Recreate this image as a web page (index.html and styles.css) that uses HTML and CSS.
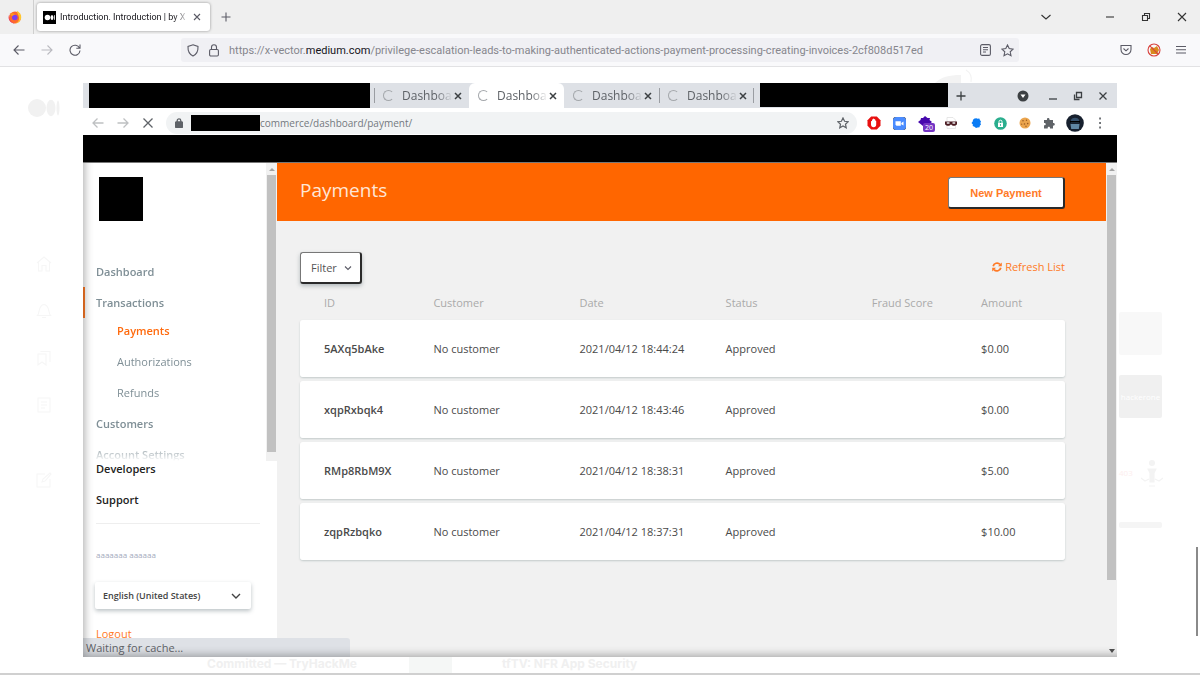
FILE: index.html
```html
<!doctype html>
<html lang="en">
<head>
  <meta charset="utf-8">
  <title>Introduction. Introduction | by X-Vector</title>
  <link rel="stylesheet" href="styles.css">
</head>
<body>
  <!-- Outer browser -->
  <header class="ff-tabs">
    <button class="ff-view" aria-label="Firefox">
      <svg width="14" height="14" viewBox="0 0 14 14"><circle cx="7" cy="7.400" r="6" fill="#ff6a2b"/><path d="M9 .8c3 1.600 4.600 4.400 4.200 7.200C12.800 11 10 13.400 7 13.400c3-1 4.500-3 4-6C10.700 5 9 4 9 .8z" fill="#ffc72e"/><path d="M1.200 4.500C.5 9 3 13 7 13.400c-3.500 0-6.400-2.700-6.400-6 0-1 .2-2 .6-2.900z" fill="#e8265a"/><circle cx="6.800" cy="7.500" r="2.800" fill="#7b3ff0"/><path d="M2 4c2-1.500 4-.6 5 .8-1.700 0-2 .8-3 1.400z" fill="#ff9a1f"/></svg>
    </button>
    <div class="ff-tab">
      <svg width="13" height="13" viewBox="0 0 13 13"><path d="M0 0h13v13H0z"/><circle cx="4.500" cy="6.500" r="2.800" fill="#fff"/><ellipse cx="9" cy="6.500" rx="1.400" ry="2.600" fill="#fff"/><path d="M11.500 4.200v4.600" stroke="#fff" stroke-width=".8"/></svg>
      <span class="ff-tab-title">Introduction. Introduction | by X</span>
      <button class="icon-btn" aria-label="Close tab"><svg width="8" height="8" viewBox="0 0 8 8"><path d="M1 1l6 6M7 1L1 7"/></svg></button>
    </div>
    <button class="icon-btn ff-new" aria-label="New tab"><svg width="10" height="10" viewBox="0 0 10 10"><path d="M5 .5v9M.5 5h9"/></svg></button>
    <div class="ff-window">
      <button class="icon-btn ff-list" aria-label="List tabs"><svg width="10" height="10" viewBox="0 0 10 10"><path d="M.5 3L5 7l4.500-4"/></svg></button>
      <button class="icon-btn" aria-label="Minimize"><svg width="10" height="10" viewBox="0 0 10 10"><path d="M1 5h8"/></svg></button>
      <button class="icon-btn" aria-label="Restore"><svg width="10" height="10" viewBox="0 0 10 10"><path d="M1.500 3.500h5v5h-5zM3.500 3.500v-2h5v5h-2"/></svg></button>
      <button class="icon-btn" aria-label="Close"><svg width="10" height="10" viewBox="0 0 10 10"><path d="M1 1l8 8M9 1L1 9"/></svg></button>
    </div>
  </header>

  <nav class="ff-toolbar">
    <div class="ff-nav">
      <button class="icon-btn" aria-label="Back"><svg width="12" height="12" viewBox="0 0 12 12"><path d="M11.500 6H1M5.500 1.500L1 6l4.500 4.500"/></svg></button>
      <button class="icon-btn faded" aria-label="Forward"><svg width="12" height="12" viewBox="0 0 12 12"><path d="M.5 6H11M6.500 1.500L11 6l-4.500 4.500"/></svg></button>
      <button class="icon-btn" aria-label="Reload"><svg width="12" height="12" viewBox="0 0 12 12"><path d="M10.500 4A5 5 0 1 0 11 6.500M11 .5V4.200H7.300"/></svg></button>
    </div>
    <div class="ff-url">
      <svg width="12" height="13" viewBox="0 0 12 13"><path d="M6 .8l5 1.700c.2 4-.8 7.500-5 9.600C1.800 10 .8 6.500 1 2.500z"/></svg>
      <svg class="ff-lock" width="10" height="13" viewBox="0 0 10 13"><rect x=".6" y="5.500" width="8.800" height="6.500" rx="1.200"/><path d="M2.500 5.500V3.200a2.500 2.500 0 0 1 5 0v2.300"/></svg>
      <div class="ff-url-text" role="textbox" aria-label="Address">https://x-vector.<b>medium.com</b>/privilege-escalation-leads-to-making-authenticated-actions-payment-processing-creating-invoices-2cf808d517ed</div>
      <button class="icon-btn" aria-label="Reader view"><svg width="11" height="12" viewBox="0 0 11 12"><rect x=".6" y=".6" width="9.800" height="10.800" rx="1.500"/><path d="M3 3.500h5M3 5.700h5M3 8h3"/></svg></button>
      <button class="icon-btn" aria-label="Bookmark"><svg width="13" height="13" viewBox="0 0 13 13"><path d="M6.500 1l1.700 3.600 3.900.5-2.900 2.700.8 3.900-3.500-1.900L3 11.700l.8-3.900L.9 5.100l3.900-.5z"/></svg></button>
    </div>
    <div class="ff-extras">
      <button class="icon-btn" aria-label="Save to Pocket"><svg width="12" height="12" viewBox="0 0 12 12"><path d="M1 1.500h10v4a5 5 0 0 1-10 0zM3.500 4.500L6 6.800l2.500-2.300"/></svg></button>
      <button class="icon-btn" aria-label="Proxy"><svg width="14" height="14" viewBox="0 0 14 14"><path d="M3 6l2-2 2 1 3-2 2 4-2 4H4z" fill="#d98a1c" stroke="none"/><circle cx="7" cy="7" r="6" stroke="#d8413c"/><path d="M2.800 2.800l8.400 8.400" stroke="#d8413c"/></svg></button>
      <button class="icon-btn" aria-label="Menu"><svg width="10" height="10" viewBox="0 0 10 10"><path d="M0 1.500h10M0 4.700h10M0 8h10"/></svg></button>
    </div>
  </nav>

  <main class="page">
    <aside class="rail">
      <svg class="rail-logo" width="32" height="18" viewBox="0 0 32 18"><circle cx="9" cy="9" r="9"/><ellipse cx="23" cy="9" rx="4.500" ry="8.300"/><ellipse cx="30" cy="9" rx="1.500" ry="7.500"/></svg>
      <svg width="16" height="16" viewBox="0 0 16 16"><path d="M1 7l7-6 7 6M2.500 6v9H6V9.500h4V15h3.500V6"/></svg>
      <svg width="16" height="16" viewBox="0 0 16 16"><path d="M1.500 12.500C4 10 2 2 8 1.500c6 .5 4 8.500 6.500 11zM6 14.500h4"/></svg>
      <svg width="16" height="16" viewBox="0 0 16 16"><path d="M2 4h8v11l-4-3-4 3zM4.500 1.500H14V12"/></svg>
      <svg width="16" height="16" viewBox="0 0 16 16"><path d="M2 1h12v14H2zM5 5h6M5 8h6M5 11h4"/></svg>
      <svg class="rail-write" width="16" height="16" viewBox="0 0 16 16"><path d="M9 2H1v13h13V7M6 10l1-3 7-6 1 1-6 7z"/></svg>
    </aside>

    <figure class="shot">
      <svg class="sketch-top" width="40" height="14" viewBox="0 0 40 14"><path d="M1 14c6-6 14-8 26-8v8z" fill="#f3f3f3"/><path d="M32 1c5 3 6 7 5 12" stroke="#f3f3f3"/></svg>

      <!-- Inner browser -->
      <div class="cr-tabs">
        <div class="redacted redacted-left"></div>
        <div class="cr-tab divided"><i class="spinner"></i><span title="Dashboard">Dashboa</span><button class="icon-btn" aria-label="Close tab"><svg width="8" height="8" viewBox="0 0 8 8"><path d="M1 1l6 6M7 1L1 7"/></svg></button></div>
        <div class="cr-tab active"><i class="spinner"></i><span title="Dashboard">Dashboa</span><button class="icon-btn" aria-label="Close tab"><svg width="8" height="8" viewBox="0 0 8 8"><path d="M1 1l6 6M7 1L1 7"/></svg></button></div>
        <div class="cr-tab"><i class="spinner"></i><span title="Dashboard">Dashboa</span><button class="icon-btn" aria-label="Close tab"><svg width="8" height="8" viewBox="0 0 8 8"><path d="M1 1l6 6M7 1L1 7"/></svg></button></div>
        <div class="cr-tab divided last"><i class="spinner"></i><span title="Dashboard">Dashboa</span><button class="icon-btn" aria-label="Close tab"><svg width="8" height="8" viewBox="0 0 8 8"><path d="M1 1l6 6M7 1L1 7"/></svg></button></div>
        <div class="redacted redacted-right"></div>
        <button class="icon-btn cr-new" aria-label="New tab"><svg width="10" height="10" viewBox="0 0 10 10"><path d="M5 .5v9M.5 5h9"/></svg></button>
        <div class="cr-window">
          <button class="icon-btn cr-search" aria-label="Search tabs"><svg width="12" height="12" viewBox="0 0 12 12"><circle cx="6" cy="6" r="5.500" fill="#3c4043" stroke="none"/><path d="M3.500 4.500h5L6 8z" fill="#fff" stroke="none"/></svg></button>
          <button class="icon-btn" aria-label="Minimize"><svg width="10" height="10" viewBox="0 0 10 10"><path d="M1 8h8"/></svg></button>
          <button class="icon-btn" aria-label="Restore"><svg width="10" height="10" viewBox="0 0 10 10"><path d="M3.500 1.500h5v5h-5zM1.500 3.500v5h5"/></svg></button>
          <button class="icon-btn" aria-label="Close"><svg width="10" height="10" viewBox="0 0 10 10"><path d="M1.500 1.500l7 7M8.500 1.500l-7 7"/></svg></button>
        </div>
      </div>

      <div class="cr-toolbar">
        <div class="cr-nav">
          <button class="icon-btn faded" aria-label="Back"><svg width="12" height="12" viewBox="0 0 12 12"><path d="M11.500 6H1M5.500 1.500L1 6l4.500 4.500"/></svg></button>
          <button class="icon-btn faded" aria-label="Forward"><svg width="12" height="12" viewBox="0 0 12 12"><path d="M.5 6H11M6.500 1.500L11 6l-4.500 4.500"/></svg></button>
          <button class="icon-btn" aria-label="Stop"><svg width="12" height="12" viewBox="0 0 12 12"><path d="M1.500 1.500l9 9M10.500 1.500l-9 9"/></svg></button>
        </div>
        <div class="omnibox">
          <svg width="8" height="10" viewBox="0 0 8 10"><rect x=".5" y="4" width="7" height="5.500" rx=".8" fill="#5f6368"/><path d="M2.200 4V2.700a1.800 1.800 0 0 1 3.600 0V4"/></svg>
          <div class="redacted redacted-url"></div>
          <input class="cr-url" type="text" aria-label="Address" value="commerce/dashboard/payment/">
          <button class="icon-btn" aria-label="Bookmark"><svg width="12" height="12" viewBox="0 0 13 13"><path d="M6.500 1l1.700 3.600 3.900.5-2.900 2.700.8 3.900-3.500-1.900L3 11.700l.8-3.900L.9 5.100l3.900-.5z"/></svg></button>
        </div>
        <div class="extensions">
          <button class="icon-btn" aria-label="Ad blocker"><svg width="14" height="14" viewBox="0 0 14 14"><path d="M4.200.5h5.600l3.700 3.800v5.400l-3.700 3.800H4.200L.5 9.700V4.300z" fill="#e81010" stroke="none"/><path d="M4 5.500c.3-.6 1-.6 1 0V3.800c0-.8 1-.8 1 0V3c0-.8 1.100-.8 1.100 0v.6c0-.8 1.100-.8 1.100 0V5c.2-.7 1-.6 1 .1v3.400c0 1.700-1 2.700-2.500 2.700C5 11.200 4 10 4 8.500z" fill="#fff" stroke="none"/></svg></button>
          <button class="icon-btn" aria-label="Meetings"><svg width="13" height="13" viewBox="0 0 13 13"><rect width="13" height="13" rx="4" fill="#4a8cff"/><rect width="13" height="13" rx="4" fill="#4a8cff" stroke="none"/><path d="M2.500 4.300h5.300v4.400H3.500l-1-1zM8.300 6l2.200-1.500v4L8.300 7.200z" fill="#fff" stroke="none"/></svg></button>
          <button class="icon-btn ext-badge" aria-label="Technology profiler, 20"><svg width="14" height="14" viewBox="0 0 14 14"><path d="M7 0l2.500 2H12l-.5 2L14 6l-5 4H5L0 6l2.500-2L3 2h2z" fill="#4608ad" stroke="none"/></svg><span class="badge">20</span></button>
          <button class="icon-btn" aria-label="Masked"><svg width="14" height="14" viewBox="0 0 14 14"><path d="M3 1.500h6l2.500 2.500v8.500H3z" fill="#fff" stroke="#ddd" stroke-width=".7"/><path d="M1 5.500h12v2.700c-2 2.300-4.500 2-6 0-1.500 2-4 2.300-6 0z" fill="#4b1b22" stroke="none"/><path d="M2.800 7h2.700M8.500 7h2.700" stroke="#eee"/></svg></button>
          <button class="icon-btn" aria-label="Scanner"><svg width="12" height="12" viewBox="0 0 12 12"><path d="M4.500 1.500l2-.3 1 .6 1.800-.3.700 1.800 1 .9-.6 1.800.6 1.500-1.200 1.200-.3 1.500-2 .3-1.500.5-1.500-1.200-1.800-.8.2-1.500L1.500 6l1.200-1.500L3 2.800z" fill="#0a7cf5" stroke="none"/></svg></button>
          <button class="icon-btn" aria-label="Passwords"><svg width="13" height="13" viewBox="0 0 13 13"><circle cx="6.500" cy="6.500" r="6.300" fill="#2bae8e" stroke="none"/><path d="M4 6h5v4H4z" fill="#fff" stroke="none"/><path d="M5 6V4.700a1.500 1.500 0 0 1 3 0V6" stroke="#fff" stroke-width="1"/><path d="M6.500 7.200v1.600" stroke="#2bae8e" stroke-width="1"/></svg></button>
          <button class="icon-btn" aria-label="Cookies"><svg width="12" height="12" viewBox="0 0 12 12"><circle cx="6" cy="6" r="5.500" fill="#eba54e" stroke="none"/><g fill="#9a5a22" stroke="none"><circle cx="4" cy="3.800" r=".8"/><circle cx="7.500" cy="3.200" r=".7"/><circle cx="8.700" cy="6.600" r=".8"/><circle cx="5.500" cy="7" r=".8"/><circle cx="7" cy="9.300" r=".7"/><circle cx="2.700" cy="7.200" r=".6"/></g></svg></button>
          <button class="icon-btn" aria-label="Extensions"><svg width="12" height="12" viewBox="0 0 12 12"><path d="M1 3h3c-.6-2.700 3-2.700 2.500 0H10v3c2.400-.4 2.400 3 0 2.600V11.500H7c.3-2.300-2.600-2.300-2.300 0H1V8.300c2.300.3 2.300-2.600 0-2.300z" fill="#5f6368" stroke="none"/></svg></button>
          <button class="icon-btn" aria-label="Profile"><svg width="18" height="18" viewBox="0 0 18 18"><circle cx="9" cy="9" r="8.800" fill="#17202e" stroke="none"/><path d="M5 6c1-3 7-3 8 0v3H5z" fill="#35506b" stroke="none"/><path d="M4 7h10v1.500H4z" fill="#000" stroke="none"/><path d="M4.500 10h9l-.7 5h-7.600z" fill="#5f86a3" stroke="none"/></svg></button>
          <button class="icon-btn" aria-label="Menu"><svg width="10" height="12" viewBox="0 0 10 12"><path d="M4.200 1.500h1.700M4.200 6h1.700M4.200 10.500h1.700" stroke-width="1.800"/></svg></button>
        </div>
      </div>
      <div class="redacted redacted-bar"></div>

      <div class="app">
        <aside class="sidebar">
          <div class="side-scroll">
            <div class="side-menu">
              <div class="redacted brand"></div>
              <a class="side-link" href="#">Dashboard</a>
              <a class="side-link current" href="#">Transactions</a>
              <div class="side-sub">
                <a class="side-link selected" href="#">Payments</a>
                <a class="side-link" href="#">Authorizations</a>
                <a class="side-link" href="#">Refunds</a>
              </div>
              <a class="side-link" href="#">Customers</a>
              <a class="side-link" href="#">Account Settings</a>
            </div>
            <div class="scrollbar side-bar"><i class="up"></i><div class="thumb"></div></div>
          </div>
          <div class="side-foot">
            <a class="foot-link" href="#">Developers</a>
            <a class="foot-link" href="#">Support</a>
            <hr>
            <p class="account">aaaaaaa aaaaaa</p>
            <div class="language">
              <select aria-label="Language"><option>English (United States)</option></select>
              <svg width="10" height="8" viewBox="0 0 10 8"><path d="M1 2l4 4 4-4"/></svg>
            </div>
            <a class="logout" href="#">Logout</a>
          </div>
        </aside>

        <section class="content">
          <header class="content-head">
            <h1>Payments</h1>
            <button class="new-payment">New Payment</button>
          </header>
          <div class="content-body">
            <div class="actions">
              <button class="filter">Filter <svg width="8" height="6" viewBox="0 0 8 6"><path d="M1 1.500l3 3 3-3"/></svg></button>
              <a class="refresh" href="#"><svg width="10" height="10" viewBox="0 0 10 10"><path d="M1.200 4.300A4 4 0 0 1 8 2.300M8.800 5.700A4 4 0 0 1 2 7.700"/><path d="M9.800.5v3.800H6zM.2 9.500V5.700H4z" fill="currentColor" stroke="none"/></svg> Refresh List</a>
            </div>
            <table class="payments">
              <thead>
                <tr><th class="col-s">ID</th><th class="col-m">Customer</th><th class="col-m">Date</th><th class="col-m">Status</th><th class="col-s">Fraud Score</th><th>Amount</th></tr>
              </thead>
              <tbody>
                <tr><td>5AXq5bAke</td><td>No customer</td><td>2021/04/12 18:44:24</td><td>Approved</td><td></td><td>$0.00</td></tr>
                <tr><td>xqpRxbqk4</td><td>No customer</td><td>2021/04/12 18:43:46</td><td>Approved</td><td></td><td>$0.00</td></tr>
                <tr><td>RMp8RbM9X</td><td>No customer</td><td>2021/04/12 18:38:31</td><td>Approved</td><td></td><td>$5.00</td></tr>
                <tr><td>zqpRzbqko</td><td>No customer</td><td>2021/04/12 18:37:31</td><td>Approved</td><td></td><td>$10.00</td></tr>
              </tbody>
            </table>
          </div>
        </section>
        <div class="scrollbar main-bar"><i class="up"></i><div class="thumb"></div><i class="down"></i></div>
        <div class="status">Waiting for cache...</div>
      </div>
    </figure>

    <aside class="more">
      <div class="thumbnail"></div>
      <div class="thumbnail dark">hackerone</div>
      <div class="thumbnail sketch"><span>403</span><svg width="22" height="30" viewBox="0 0 22 30"><circle cx="11" cy="5" r="2.500" fill="#f3f3f3"/><path d="M7 11h8l-2 4v9H9v-9z" fill="#f3f3f3"/><path d="M0 20l4 3 4-2M22 20l-4 3-4-2M8 28h6"/></svg></div>
      <div class="thumbnail strip"></div>
    </aside>
  </main>

  <footer class="posts">
    <span class="post-a">Committed — TryHackMe</span>
    <span class="post-thumb"></span>
    <span>tfTV: NFR App Security</span>
  </footer>
  <div class="page-thumb"></div>
</body>
</html>
```
FILE: styles.css
```css
* {
  box-sizing: border-box;
}
body {
  margin: 0;
  height: 100vh;
  min-height: 640px;
  display: flex;
  flex-direction: column;
  background: #fff;
  font-family: "Open Sans", "Noto Sans", sans-serif;
  font-size: 11px;
  color: #4a4a4a;
  position: relative;
  border-bottom: 2px solid #d0d0d0;
}
a {
  text-decoration: none;
}
svg {
  display: block;
  flex: none;
  fill: none;
  stroke: #5b5b66;
  stroke-width: 1.1;
}
button {
  font-family: inherit;
  cursor: pointer;
}
.icon-btn {
  display: flex;
  align-items: center;
  justify-content: center;
  flex: none;
  border: none;
  background: none;
  padding: 0;
}
.faded {
  opacity: 0.4;
}
.redacted {
  background: #000;
}

/* Outer browser */
.ff-tabs {
  height: 34px;
  flex: none;
  display: flex;
  align-items: center;
  background: #efefef;
}
.ff-view {
  height: 34px;
  width: 34px;
  padding: 0 0 0 8px;
  border: none;
  border-right: 1px solid #cfcfcf;
  background: none;
}
.ff-view svg {
  stroke: none;
}
.ff-tab {
  display: flex;
  align-items: center;
  gap: 4px;
  width: 173px;
  height: 28px;
  margin-left: 3px;
  padding: 0 9px 0 6px;
  border-radius: 3px;
  background: #fff;
  box-shadow: 0 0 3px rgba(0, 0, 0, 0.4);
}
.ff-tab > svg {
  stroke: none;
  fill: #000;
}
.ff-tab-title {
  flex: 1;
  white-space: nowrap;
  font-family: Roboto, sans-serif;
  font-size: 9px;
  color: #15141a;
  mask-image: linear-gradient(to right, #000 88%, transparent);
}
.ff-new {
  margin-left: 11px;
}
.ff-window {
  display: flex;
  gap: 26px;
  margin-left: auto;
  padding-right: 13px;
}
.ff-window svg {
  stroke: #333;
}
.ff-window .ff-list {
  margin-right: 28px;
}
.ff-toolbar {
  display: flex;
  align-items: center;
  flex: none;
  height: 33px;
  background: #f9f9fb;
  border-bottom: 1px solid #e2e2e4;
}
.ff-nav {
  display: flex;
  gap: 16px;
  width: 181px;
  padding-left: 13px;
}
.ff-url {
  flex: 1;
  min-width: 0;
  display: flex;
  align-items: center;
  gap: 10px;
  height: 24px;
  padding: 0 5px 0 6px;
  border-radius: 3px;
  background: #f0f0f4;
}
.ff-url-text {
  flex: 1;
  overflow: hidden;
  white-space: nowrap;
  font-family: Roboto, sans-serif;
  color: #86868d;
}
.ff-url-text b {
  font-weight: 400;
  color: #15141a;
}
.ff-extras {
  display: flex;
  gap: 15px;
  width: 181px;
  justify-content: flex-end;
  padding-right: 14px;
}

/* Article page behind the opened figure */
.page {
  flex: 1;
  min-height: 0;
  display: grid;
  grid-template-columns: 83px 1fr 83px;
  grid-template-rows: minmax(0, 1fr);
  padding-top: 16px;
}
.rail {
  display: flex;
  flex-direction: column;
  align-items: center;
  gap: 31px;
  padding: 16px 0 0 4px;
}
.rail svg {
  stroke: #f6f6f6;
}
.rail .rail-logo {
  fill: #f1f1f1;
  stroke: none;
  margin-bottom: 108px;
}
.rail .rail-write {
  margin-top: 28px;
}
.more {
  display: flex;
  flex-direction: column;
  gap: 20px;
  padding: 229px 0 0 2px;
}
.thumbnail {
  flex: none;
  width: 43px;
  height: 43px;
  border-radius: 2px;
  background: #f8f8f8;
  font-size: 8px;
  line-height: 43px;
  text-align: center;
}
.thumbnail.dark {
  background: #f0f0f0;
  color: #fff;
}
.thumbnail.sketch {
  display: flex;
  align-items: center;
  gap: 8px;
  margin-top: 13px;
  background: none;
  color: #fdeeee;
}
.thumbnail.sketch svg {
  stroke: #f3f3f3;
}
.thumbnail.strip {
  height: 6px;
  margin-top: 8px;
  background: #f5f5f5;
}
.posts {
  flex: none;
  display: flex;
  height: 16px;
  padding-left: 207px;
  font-family: Inter, sans-serif;
  font-size: 12px;
  font-weight: 700;
  line-height: 14px;
  color: #f0f0f0;
}
.post-a {
  width: 202px;
}
.post-thumb {
  width: 43px;
  margin-right: 50px;
  background: #f5f7f6;
}
.page-thumb {
  position: absolute;
  right: 2px;
  top: 547px;
  width: 2px;
  height: 89px;
  background: #8a8a8a;
}

/* Figure: inner browser */
.shot {
  position: relative;
  display: flex;
  flex-direction: column;
  min-width: 0;
  min-height: 0;
  margin: 0;
}
.sketch-top {
  position: absolute;
  right: 143px;
  top: -14px;
  stroke: none;
}
.cr-tabs {
  flex: none;
  display: flex;
  height: 25px;
  padding-left: 6px;
  background: #dee1e6;
}
.redacted-left {
  width: 281px;
  margin-right: 4px;
}
.redacted-right {
  width: 188px;
  height: 24px;
}
.cr-tab {
  display: flex;
  align-items: center;
  width: 95px;
  padding: 0 7px 0 9px;
  font-size: 12px;
  color: #5f6368;
}
.cr-tab span {
  width: 52px;
  margin-left: 8px;
  mask-image: linear-gradient(to right, #000 65%, transparent 98%);
}
.cr-tab.active {
  border-radius: 6px 6px 0 0;
  background: #fff;
}
.cr-tab svg {
  stroke: #3c4043;
  stroke-width: 1.5;
}
.cr-tab.divided {
  background: linear-gradient(#9a9da2, #9a9da2) 0 50% / 1px 15px no-repeat;
}
.cr-tab.last {
  background: linear-gradient(#9a9da2, #9a9da2) 0 50% / 1px 15px no-repeat, linear-gradient(#9a9da2, #9a9da2) 100% 50% / 1px 15px no-repeat;
  margin-right: 6px;
}
.spinner {
  flex: none;
  width: 11px;
  height: 11px;
  border: 1px solid #a5a8ac;
  border-right-color: transparent;
  border-radius: 50%;
}
.cr-new {
  margin-left: 8px;
}
.cr-new svg,
.cr-window svg {
  stroke: #3c4043;
  stroke-width: 1.3;
}
.cr-window {
  display: flex;
  gap: 15px;
  margin-left: auto;
  padding-right: 9px;
}
.cr-search {
  margin-right: 4px;
}
.cr-toolbar {
  flex: none;
  display: flex;
  align-items: center;
  height: 27px;
  padding: 3px 12px 0 9px;
  background: #fff;
}
.cr-toolbar svg {
  stroke: #5f6368;
  stroke-width: 1.3;
}
.cr-nav {
  display: flex;
  gap: 13px;
}
.omnibox {
  flex: 1;
  min-width: 0;
  display: flex;
  align-items: center;
  height: 22px;
  margin-left: 12px;
  padding: 0 8px 0 9px;
  border-radius: 11px;
  background: #f1f3f4;
}
.redacted-url {
  width: 69px;
  height: 16px;
  margin-left: 8px;
}
.cr-url {
  flex: 1;
  min-width: 0;
  border: none;
  outline: none;
  padding: 0;
  background: none;
  font-family: inherit;
  font-size: 10px;
  color: #74797f;
}
.extensions {
  display: flex;
  align-items: center;
  gap: 12px;
  margin-left: 10px;
}
.extensions .icon-btn:nth-last-child(-n+2) {
  margin-left: -1px;
}
.ext-badge {
  position: relative;
}
.badge {
  position: absolute;
  left: 5px;
  top: 7px;
  padding: 0 2px;
  border-radius: 2px;
  background: #7434c4;
  color: #fff;
  font-size: 7px;
  line-height: 9px;
}
.redacted-bar {
  flex: none;
  height: 28px;
  border-bottom: 1px solid #777;
}

/* Dashboard */
.app {
  flex: 1;
  min-height: 0;
  display: flex;
  position: relative;
  overflow: hidden;
  background: #f1f1f1;
}
.app::after {
  content: "";
  position: absolute;
  inset: 0;
  box-shadow: inset 8px -8px 8px -6px rgba(0, 0, 0, 0.3);
  pointer-events: none;
}
.sidebar {
  flex: none;
  display: flex;
  flex-direction: column;
  width: 194px;
  background: #fff;
}
.side-scroll {
  flex: 1;
  min-height: 0;
  display: flex;
}
.side-menu {
  flex: 1;
  overflow: hidden;
  padding-top: 14px;
  mask-image: linear-gradient(to top, transparent, #000 16px);
}
.brand {
  width: 44px;
  height: 44px;
  margin: 0 0 35px 16px;
}
.side-link {
  display: block;
  padding-left: 13px;
  line-height: 31px;
  font-weight: 600;
  color: #7f8f96;
}
.side-link.current {
  padding-left: 11px;
  border-left: 2px solid #ff7a26;
}
.side-sub {
  margin-top: -3px;
  padding-left: 21px;
}
.side-sub .side-link {
  font-weight: 400;
}
.side-sub .selected {
  font-weight: 600;
  color: #ff6a0d;
}
.scrollbar {
  flex: none;
  display: flex;
  flex-direction: column;
  align-items: center;
  width: 11px;
  background: #f1f1f1;
}
.scrollbar i {
  border: 3px solid transparent;
}
.scrollbar .up {
  border-top: none;
  border-bottom: 3px solid #a3a3a3;
  margin: 5px 0 4px;
}
.scrollbar .down {
  border-bottom: none;
  border-top: 4px solid #505050;
  margin: auto 0 4px;
}
.thumb {
  width: 9px;
  background: #c1c1c1;
}
.side-bar .thumb {
  height: 93%;
}
.main-bar .thumb {
  height: 82%;
}
.side-foot {
  padding: 0 17px 15px 13px;
}
.foot-link,
.logout {
  display: block;
  margin-bottom: 15px;
  line-height: 16px;
  font-weight: 600;
  color: #222;
}
.side-foot hr {
  height: 1px;
  margin: 0 0 23px;
  border: none;
  background: #eee;
}
.account {
  margin: 0 0 19px;
  font-size: 8px;
  line-height: 16px;
  color: #a3abbd;
}
.language {
  display: flex;
  align-items: center;
  width: 156px;
  height: 27px;
  margin: 0 0 17px -1px;
  padding-right: 10px;
  border-radius: 2px;
  background: #fff;
  box-shadow: 0 2px 4px rgba(60, 80, 90, 0.35);
}
.language select {
  flex: 1;
  height: 27px;
  padding: 0 0 0 8px;
  appearance: none;
  border: none;
  background: none;
  font-family: inherit;
  font-size: 9px;
  font-weight: 600;
  color: #444;
}
.language svg {
  stroke: #444;
  stroke-width: 1.4;
}
.logout {
  margin: 0;
  font-weight: 400;
  color: #ff7a26;
}
.content {
  flex: 1;
  min-width: 0;
}
.content-head {
  display: flex;
  align-items: flex-start;
  justify-content: space-between;
  height: 58px;
  padding: 14px 41px 0 23px;
  background: #f60;
}
h1 {
  margin: 0;
  font-size: 19px;
  font-weight: 400;
  line-height: 27px;
  color: #ffe6d6;
}
.new-payment,
.filter {
  border: 1px solid #777;
  border-right: 2px solid #2a2a2a;
  border-bottom: 2px solid #2a2a2a;
  border-radius: 3px;
  background: #fff;
}
.new-payment {
  width: 117px;
  height: 32px;
  font-family: "Liberation Sans", Arial, sans-serif;
  font-size: 11px;
  font-weight: 700;
  color: #ff7a26;
}
.content-body {
  padding: 31px 41px 0 23px;
}
.actions {
  display: flex;
  justify-content: space-between;
}
.filter {
  display: flex;
  align-items: center;
  gap: 7px;
  height: 32px;
  padding: 0 8px 0 10px;
  font-size: 11px;
  color: #555;
  box-shadow: 0 2px 4px rgba(60, 80, 90, 0.35);
}
.refresh {
  display: flex;
  align-items: center;
  gap: 3px;
  height: 29px;
  color: #ff7a26;
}
.refresh svg {
  stroke: currentColor;
  stroke-width: 1.8;
}
.payments {
  width: 100%;
  table-layout: fixed;
  border-spacing: 0 4px;
  margin-top: -4px;
}
.payments th,
.payments td {
  padding: 0 0 0 24px;
  text-align: left;
  white-space: nowrap;
}
.payments th {
  height: 32px;
  padding-top: 4px;
  font-weight: 500;
  color: #aaa;
}
.payments td {
  height: 57px;
  background: #fff;
}
.payments td:first-child {
  border-radius: 3px 0 0 3px;
  font-weight: 600;
}
.payments td:last-child {
  border-radius: 0 3px 3px 0;
}
.payments tbody tr {
  border-radius: 3px;
  box-shadow: 0 1px 2px rgba(60, 90, 90, 0.25);
}
.col-s {
  width: 14.3%;
}
.col-m {
  width: 19.1%;
}
.status {
  position: absolute;
  left: 0;
  bottom: 0;
  width: 267px;
  height: 19px;
  padding-left: 3px;
  border-radius: 0 3px 0 0;
  background: #dee1e6;
  font-size: 11px;
  line-height: 19px;
  color: #5f6368;
}
```
